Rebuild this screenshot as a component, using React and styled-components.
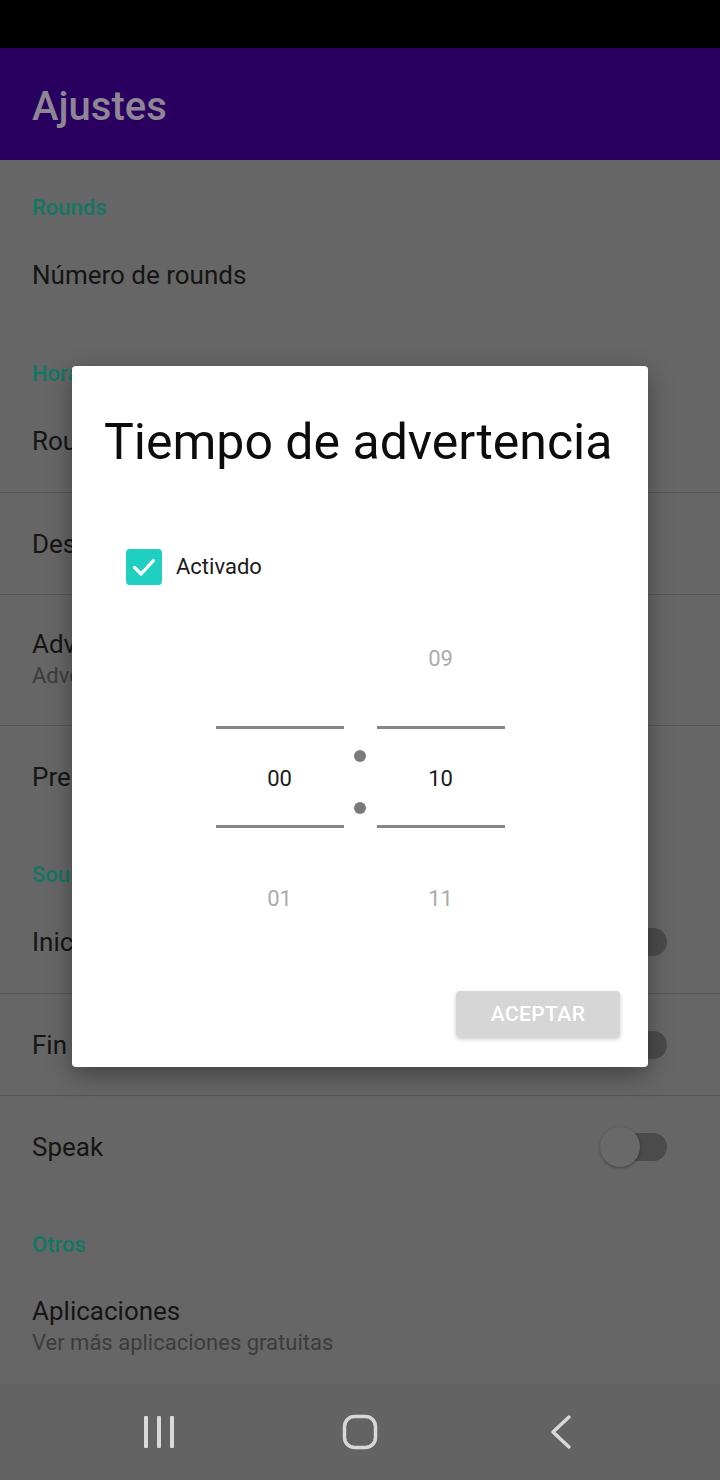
import React from "react";
import styled, { createGlobalStyle } from "styled-components";

const GlobalStyle = createGlobalStyle`
  html, body {
    margin: 0;
    padding: 0;
    background: #666666;
  }
  body {
    font-family: Roboto, "Noto Sans", "Liberation Sans", sans-serif;
  }
`;

const Screen = styled.div`
  position: relative;
  width: 720px;
  height: 1480px;
  display: flex;
  flex-direction: column;
  background: #666666;
  overflow: hidden;
`;

const StatusBar = styled.div`
  height: 48px;
  flex-shrink: 0;
  background: #000;
`;

const AppBar = styled.div`
  height: 112px;
  box-sizing: border-box;
  flex-shrink: 0;
  background: #29005f;
  display: flex;
  align-items: center;
  padding: 4px 32px 0;
`;

const AppTitle = styled.h1`
  margin: 0;
  font-size: 40px;
  font-weight: 500;
  color: #8d8795;
`;

const Content = styled.div`
  flex: 1;
  overflow: hidden;
`;

const Category = styled.div`
  height: 64px;
  box-sizing: border-box;
  padding: 35px 32px 0;
  font-size: 22px;
  line-height: 26px;
  font-weight: 500;
  color: #127664;
`;

const Row = styled.div`
  height: ${p => (p.tall ? 131 : 102)}px;
  box-sizing: border-box;
  display: flex;
  align-items: center;
  padding: 0 32px;
  border-top: ${p => (p.divided ? "1px solid #565656" : "none")};
`;

const RowText = styled.div`
  flex: 1;
  display: flex;
  flex-direction: column;
`;

const RowTitle = styled.div`
  font-size: 26px;
  line-height: 32px;
  color: #151515;
`;

const RowSub = styled.div`
  font-size: 22px;
  line-height: 32px;
  color: #3c3c3c;
`;

const Switch = styled.div`
  position: relative;
  width: 68px;
  height: 40px;
  margin-right: 21px;
  display: flex;
  align-items: center;
`;

const Track = styled.div`
  width: 60px;
  height: 28px;
  margin-left: 8px;
  border-radius: 14px;
  background: #4b4b4b;
`;

const Thumb = styled.div`
  position: absolute;
  left: 1px;
  top: 0;
  width: 40px;
  height: 40px;
  border-radius: 50%;
  background: #696969;
  box-shadow: 0 1px 3px rgba(0, 0, 0, 0.35);
`;

const NavBar = styled.div`
  height: 96px;
  flex-shrink: 0;
  background: #636363;
  display: flex;
  align-items: center;
  gap: 161px;
  padding-left: 139px;
  position: relative;
  z-index: 2;
`;

const NavIcon = styled.svg`
  width: 40px;
  height: 40px;
  display: block;
`;

const Scrim = styled.div`
  position: absolute;
  top: 48px;
  bottom: 96px;
  left: 0;
  right: 0;
  display: flex;
  align-items: center;
  justify-content: center;
  z-index: 1;
`;

const Dialog = styled.div`
  width: 576px;
  box-sizing: border-box;
  background: #fff;
  border-radius: 4px;
  padding: 47px 28px 30px;
  box-shadow: 0 8px 24px rgba(0, 0, 0, 0.35);
  display: flex;
  flex-direction: column;
`;

const DialogTitle = styled.h2`
  margin: 0 0 0 4px;
  font-size: 50px;
  line-height: 58px;
  font-weight: 400;
  color: #0c0c0c;
  white-space: nowrap;
`;

const CheckRow = styled.label`
  display: flex;
  align-items: center;
  gap: 14px;
  margin: 78px 0 0 26px;
  font-size: 22px;
  color: #1a1a1a;
`;

const CheckBox = styled.span`
  width: 36px;
  height: 36px;
  border-radius: 4px;
  background: #1fd0c0;
  display: flex;
  align-items: center;
  justify-content: center;
`;

const Picker = styled.div`
  margin-top: 14px;
  align-self: center;
  display: flex;
`;

const Column = styled.div`
  width: 128px;
  display: flex;
  flex-direction: column;
`;

const Cell = styled.div`
  height: 120px;
  display: flex;
  align-items: center;
  justify-content: center;
  font-size: 22px;
  color: ${p => (p.active ? "#1a1a1a" : "#ababab")};
`;

const Selected = styled.div`
  height: 102px;
  box-sizing: border-box;
  width: 100%;
  margin-top: -4px;
  padding-top: 4px;
  border-top: 3px solid #878787;
  border-bottom: 3px solid #878787;
  display: flex;
  align-items: center;
  justify-content: center;
`;

const Colon = styled.div`
  width: 33px;
  display: flex;
  flex-direction: column;
  align-items: center;
  justify-content: center;
  gap: 40px;
  margin-top: 7px;
`;

const Dot = styled.span`
  width: 12px;
  height: 12px;
  border-radius: 50%;
  background: #7a7a7a;
`;

const Actions = styled.div`
  margin-top: 32px;
  display: flex;
  justify-content: flex-end;
`;

const Button = styled.button`
  width: 164px;
  height: 46px;
  border: 0;
  border-radius: 4px;
  background: #d6d6d6;
  color: #fff;
  font-family: Roboto, "Liberation Sans", sans-serif;
  font-size: 21px;
  font-weight: 500;
  letter-spacing: 0.4px;
  box-shadow: 0 2px 4px rgba(0, 0, 0, 0.22);
`;

const Toggle = () => (
  <Switch>
    <Track />
    <Thumb />
  </Switch>
);

const PickerColumn = ({ values }) => (
  <Column>
    <Cell>{values[0]}</Cell>
    <Cell active>
      <Selected>{values[1]}</Selected>
    </Cell>
    <Cell>{values[2]}</Cell>
  </Column>
);

export default function App() {
  return (
    <Screen>
      <GlobalStyle />
      <StatusBar />
      <AppBar>
        <AppTitle>Ajustes</AppTitle>
      </AppBar>
      <Content>
        <Category>Rounds</Category>
        <Row>
          <RowText>
            <RowTitle>Número de rounds</RowTitle>
          </RowText>
        </Row>
        <Category>Horarios</Category>
        <Row>
          <RowText>
            <RowTitle>Round</RowTitle>
          </RowText>
        </Row>
        <Row divided>
          <RowText>
            <RowTitle>Descanso</RowTitle>
          </RowText>
        </Row>
        <Row divided tall>
          <RowText>
            <RowTitle>Advertencia</RowTitle>
            <RowSub>Advertencia 10 segundos antes</RowSub>
          </RowText>
        </Row>
        <Row divided>
          <RowText>
            <RowTitle>Preparación</RowTitle>
          </RowText>
        </Row>
        <Category>Sounds</Category>
        <Row>
          <RowText>
            <RowTitle>Inicio</RowTitle>
          </RowText>
          <Toggle />
        </Row>
        <Row divided>
          <RowText>
            <RowTitle>Fin</RowTitle>
          </RowText>
          <Toggle />
        </Row>
        <Row divided>
          <RowText>
            <RowTitle>Speak</RowTitle>
          </RowText>
          <Toggle />
        </Row>
        <Category>Otros</Category>
        <Row tall>
          <RowText>
            <RowTitle>Aplicaciones</RowTitle>
            <RowSub>Ver más aplicaciones gratuitas</RowSub>
          </RowText>
        </Row>
      </Content>
      <NavBar>
        <NavIcon viewBox="0 0 40 40">
          <g fill="#d8d8d8">
            <rect x="5" y="4" width="4" height="32" rx="1" />
            <rect x="18" y="4" width="4" height="32" rx="1" />
            <rect x="31" y="4" width="4" height="32" rx="1" />
          </g>
        </NavIcon>
        <NavIcon viewBox="0 0 40 40">
          <rect x="4.5" y="4.5" width="31" height="31" rx="10" fill="none" stroke="#d8d8d8" strokeWidth="3.5" />
        </NavIcon>
        <NavIcon viewBox="0 0 40 40">
          <path d="M28 5 L12 20 L28 35" fill="none" stroke="#d8d8d8" strokeWidth="3.5" strokeLinecap="round" strokeLinejoin="round" />
        </NavIcon>
      </NavBar>
      <Scrim>
        <Dialog>
          <DialogTitle>Tiempo de advertencia</DialogTitle>
          <CheckRow>
            <CheckBox>
              <svg width="28" height="28" viewBox="0 0 24 24">
                <path d="M4 12.5 L9.5 18 L20 6.5" fill="none" stroke="#fff" strokeWidth="2.8" strokeLinecap="round" strokeLinejoin="round" />
              </svg>
            </CheckBox>
            Activado
          </CheckRow>
          <Picker>
            <PickerColumn values={["", "00", "01"]} />
            <Colon>
              <Dot />
              <Dot />
            </Colon>
            <PickerColumn values={["09", "10", "11"]} />
          </Picker>
          <Actions>
            <Button>ACEPTAR</Button>
          </Actions>
        </Dialog>
      </Scrim>
    </Screen>
  );
}
